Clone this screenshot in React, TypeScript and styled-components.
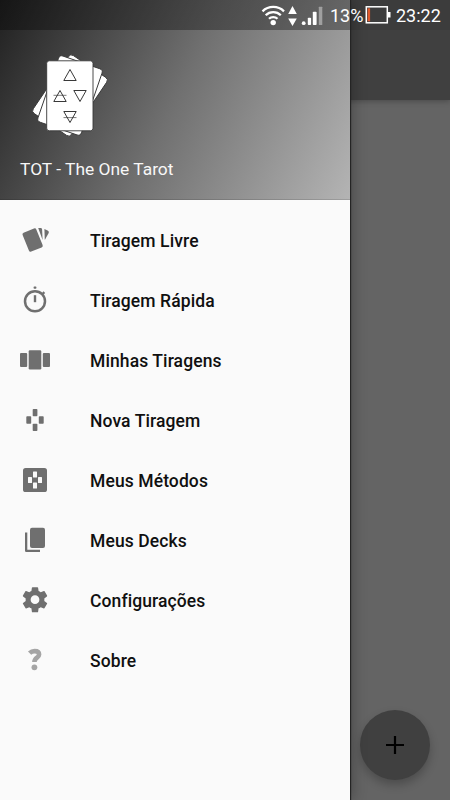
import React from "react";
import styled, { createGlobalStyle } from "styled-components";

const GlobalStyle = createGlobalStyle`
  * { box-sizing: border-box; }
  body { margin: 0; overflow: hidden; }
`;

const Screen = styled.div`
  position: relative;
  width: 450px;
  height: 800px;
  overflow: hidden;
  background: #646464;
  font-family: Roboto, "Liberation Sans", sans-serif;
`;

const AppBar = styled.header`
  height: 100px;
  border-top: 30px solid #3c3c3c;
  background: #404040;
  box-shadow: 0 1px 6px rgba(0, 0, 0, 0.3);
`;

const StatusBar = styled.div`
  position: absolute;
  inset: 0 0 auto 0;
  height: 30px;
  padding: 1px 9px 0 0;
  display: flex;
  align-items: center;
  justify-content: flex-end;
  color: #fff;
  background: linear-gradient(rgba(0, 0, 0, 0.33), rgba(0, 0, 0, 0.33)) left / 350px 100% no-repeat;
`;

const StatusIcons = styled.svg`
  width: 66px;
  height: 28px;
  margin-right: 4px;
`;

const StatusText = styled.span<{ $width: number }>`
  width: ${(p) => p.$width}px;
  font-size: 18px;
  line-height: 28px;
  white-space: nowrap;
`;

const Battery = styled.svg`
  width: 26px;
  height: 20px;
  margin-right: 5px;
  margin-top: -2px;
`;

const Drawer = styled.aside`
  position: absolute;
  inset: 0 auto 0 0;
  width: 350px;
  display: flex;
  flex-direction: column;
  background: #fafafa;
  box-shadow: 1px 0 1px #242424, 2px 0 14px rgba(0, 0, 0, 0.3);
`;

const DrawerHeader = styled.div`
  height: 200px;
  padding: 50px 20px 0;
  border-bottom: 1px solid rgba(0, 0, 0, 0.12);
  background: linear-gradient(116deg, #202020 0%, #707070 50%, #b4b4b4 100%) border-box;
`;

const Logo = styled.svg`
  display: block;
  width: 100px;
  height: 95px;
`;

const Title = styled.div`
  margin-top: 12px;
  font-size: 17.4px;
  line-height: 24px;
  color: #f7f7f7;
`;

const Menu = styled.nav`
  padding-top: 10px;
`;

const MenuRow = styled.div`
  display: flex;
  align-items: center;
  height: 60px;
  padding-left: 20px;
  gap: 40px;
  font-size: 17.5px;
  font-weight: 500;
  color: #101010;
`;

const MenuLabel = styled.span`
  padding-top: 2px;
  letter-spacing: 0.1px;
`;

const MenuIcon = styled.svg`
  width: 30px;
  height: 30px;
  flex: none;
  fill: #6f6f6f;
`;

const Fab = styled.button`
  position: absolute;
  right: 20px;
  bottom: 20px;
  width: 70px;
  height: 70px;
  padding: 0;
  border: 0;
  border-radius: 50%;
  display: grid;
  place-items: center;
  background: #404040;
  box-shadow: 0 5px 10px rgba(0, 0, 0, 0.24);
`;

const stroke = { fill: "none", stroke: "#fff" };

const items: { label: string; icon: React.ReactNode }[] = [
  {
    label: "Tiragem Livre",
    icon: (
      <>
        <rect x="5.200" y="4.800" width="14.800" height="20.400" rx="1.800" transform="rotate(-22 12.700 15)" />
        <path d="M18.200 3h2.400c.9 0 1.500.6 1.500 1.500l.5 10.500z" />
        <path d="M24.400 4.100l3.200 1.500c1 .5 1.500 1.400 1.100 2.400l-3.900 7z" />
      </>
    ),
  },
  {
    label: "Tiragem Rápida",
    icon: (
      <>
        <circle cx="15" cy="16.200" r="10" fill="none" stroke="#6f6f6f" strokeWidth="2.500" />
        <rect x="13.800" y="10.200" width="2.400" height="7" />
        <rect x="13.600" y="1.500" width="2.800" height="2.200" rx=".7" />
        <path d="M21.700 8.200l1.900-1.900 1.600 1.600-1.900 1.900z" />
      </>
    ),
  },
  {
    label: "Minhas Tiragens",
    icon: (
      <>
        <rect x="0" y="8" width="7.200" height="14" rx="1" />
        <rect x="8.700" y="5.300" width="12.600" height="19.200" rx="1.200" />
        <rect x="22.800" y="8" width="7.200" height="14" rx="1" />
      </>
    ),
  },
  {
    label: "Nova Tiragem",
    icon: (
      <>
        <rect x="12.700" y="4" width="4.700" height="7.200" rx=".8" />
        <rect x="6.300" y="11.300" width="4.900" height="7.400" rx=".8" />
        <rect x="18.800" y="11.300" width="4.900" height="7.400" rx=".8" />
        <rect x="12.700" y="18.800" width="4.700" height="7.200" rx=".8" />
      </>
    ),
  },
  {
    label: "Meus Métodos",
    icon: (
      <>
        <rect x="3" y="3" width="24" height="24" rx="2.600" />
        <g fill="#fafafa">
          <rect x="13" y="6.500" width="4" height="6" rx=".5" />
          <rect x="8" y="12" width="4" height="6" rx=".5" />
          <rect x="18" y="12" width="4" height="6" rx=".5" />
          <rect x="13" y="17.500" width="4" height="6" rx=".5" />
        </g>
      </>
    ),
  },
  {
    label: "Meus Decks",
    icon: (
      <>
        <rect x="10" y="2.700" width="15" height="20.200" rx="2" />
        <path d="M5 7.500h2.300v17.300H20V27H6.200A1.200 1.200 0 0 1 5 25.800z" />
      </>
    ),
  },
  {
    label: "Configurações",
    icon: (
      <path
        transform="translate(0 -.3) scale(1.25)"
        d="M19.430 12.980c.04-.32.07-.64.07-.98s-.03-.66-.07-.98l2.110-1.650c.19-.15.24-.42.12-.64l-2-3.460c-.12-.22-.39-.3-.61-.22l-2.490 1c-.52-.4-1.080-.73-1.690-.98l-.38-2.650C14.460 2.180 14.250 2 14 2h-4c-.25 0-.46.18-.49.42l-.38 2.650c-.61.25-1.170.59-1.690.98l-2.490-1c-.23-.09-.49 0-.61.22l-2 3.460c-.13.22-.07.49.12.64l2.110 1.650c-.04.32-.07.65-.07.98s.03.66.07.98l-2.110 1.650c-.19.15-.24.42-.12.64l2 3.460c.12.22.39.3.61.22l2.490-1c.52.4 1.080.73 1.690.98l.38 2.650c.03.24.24.42.49.42h4c.25 0 .46-.18.49-.42l.38-2.650c.61-.25 1.170-.59 1.690-.98l2.490 1c.23.09.49 0 .61-.22l2-3.460c.12-.22.07-.49-.12-.64zM12 15.500A3.500 3.500 0 1 1 12 8.500a3.500 3.500 0 0 1 0 7z"
      />
    ),
  },
  {
    label: "Sobre",
    icon: (
      <g fill="none" stroke="#a5a5a5">
        <path d="M9.600 8.200c1.500-1.500 3.100-2.100 5-2.100 2.900 0 4.500 1.300 4.500 3.400 0 3.500-4.700 2.800-4.700 7.600" strokeWidth="4.600" />
        <circle cx="14.400" cy="22.300" r="2.900" fill="#a5a5a5" stroke="none" />
      </g>
    ),
  },
];

function TarotLogo() {
  return (
    <Logo viewBox="0 0 100 95">
      <g fill="#fff" stroke="#383838" strokeWidth=".9">
        <rect x="27" y="10.500" width="46" height="70" rx="3.500" transform="rotate(34 50 45.500)" />
        <rect x="27" y="10.500" width="46" height="70" rx="3.500" transform="rotate(19 50 45.500)" />
        <rect x="26.700" y="10.800" width="46.300" height="70" rx="2.600" />
      </g>
      <g fill="none" stroke="#222" strokeWidth=".9">
        <path d="M50 19.500l-6.200 11h12.400zM40 40.500l-6.200 11h12.400zM60 51.500l-6.200-11h12.400zM50 72.500l-6.200-11h12.400z" />
        <path d="M33.500 45.300h13M43.500 67.600h13" strokeWidth=".6" />
      </g>
    </Logo>
  );
}

export default function App() {
  return (
    <>
      <GlobalStyle />
      <Screen>
        <AppBar />
        <Fab aria-label="Adicionar">
          <svg width="18" height="18" viewBox="0 0 18 18">
            <path d="M9 0v18M0 9h18" stroke="#000" strokeWidth="2.200" />
          </svg>
        </Fab>
        <Drawer>
          <DrawerHeader>
            <TarotLogo />
            <Title>TOT - The One Tarot</Title>
          </DrawerHeader>
          <Menu>
            {items.map(({ label, icon }) => (
              <MenuRow key={label}>
                <MenuIcon viewBox="0 0 30 30">{icon}</MenuIcon>
                <MenuLabel>{label}</MenuLabel>
              </MenuRow>
            ))}
          </Menu>
        </Drawer>
        <StatusBar>
          <StatusIcons viewBox="0 0 66 28">
            <g {...stroke} strokeWidth="2.300">
              <path d="M2.500 9.300a15.500 15.500 0 0 1 21.500 0" />
              <path d="M5.700 13.200a10.800 10.800 0 0 1 15.100 0" />
              <path d="M9 16.800a6 6 0 0 1 8.500 0" />
            </g>
            <g fill="#fff">
              <circle cx="13.200" cy="20.600" r="2.700" />
              <path d="M32.500 4l4.300 8h-8.600zM32.500 24l4.300-7.600h-8.600z" />
              <circle cx="43.700" cy="21.200" r="1.900" />
              <rect x="47.800" y="15.700" width="3.300" height="7.300" rx=".8" />
              <rect x="52.800" y="9.700" width="3.800" height="13.300" rx=".8" />
              <rect x="58.800" y="4.700" width="3.500" height="18.300" rx=".5" opacity=".4" />
            </g>
          </StatusIcons>
          <StatusText $width={35}>13%</StatusText>
          <Battery viewBox="0 0 26 20">
            <rect x="1.300" y="1.800" width="21" height="16" {...stroke} strokeWidth="1.500" />
            <rect x="2.600" y="3.300" width="2.500" height="13" fill="#e25a2c" />
            <rect x="23" y="7" width="2.500" height="5.500" fill="#fff" />
          </Battery>
          <StatusText $width={45}>23:22</StatusText>
        </StatusBar>
      </Screen>
    </>
  );
}
